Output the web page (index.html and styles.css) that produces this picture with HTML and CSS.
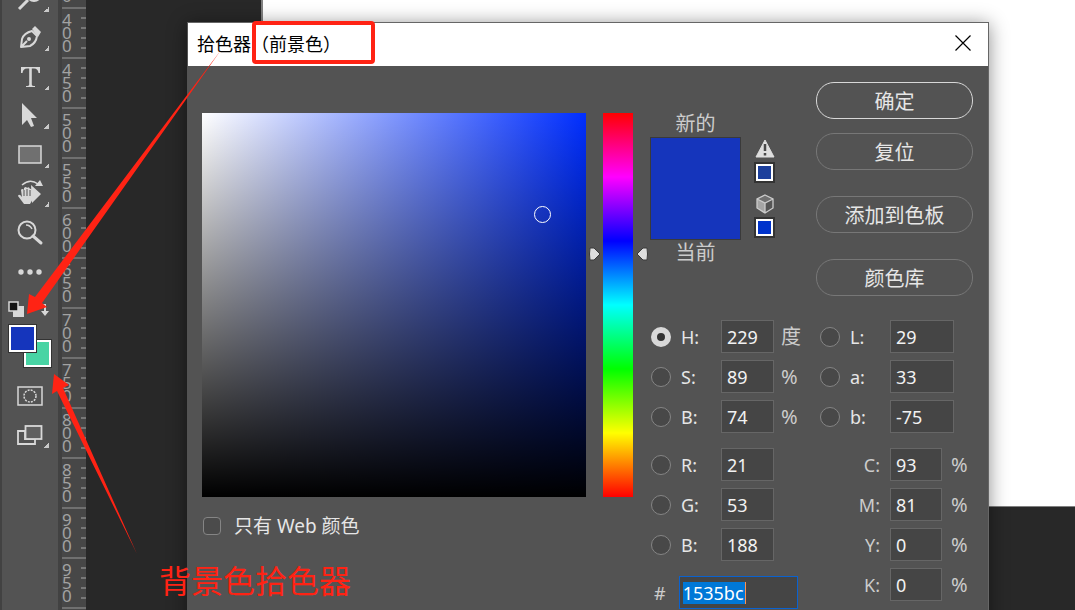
FILE: index.html
```html
<!DOCTYPE html>
<html lang="zh-CN">
<head>
<meta charset="utf-8">
<title>拾色器</title>
<link rel="stylesheet" href="styles.css">
</head>
<body>
<div class="app">
  <nav class="toolbar">
    <button class="tool has-menu" aria-label="减淡工具"><svg width="30" height="30" viewBox="0 0 30 30"><circle cx="19" cy="10" r="8" fill="#d8d8d8"/><path d="M13 16 4 25" stroke="#d8d8d8" stroke-width="3"/></svg></button>
    <button class="tool has-menu" aria-label="钢笔工具"><svg width="30" height="30" viewBox="0 0 30 30"><path d="M6 24 7 16Q9 10 17 8L22 13Q21 20 15 23Z M6 24 12 18" fill="none" stroke="#d8d8d8" stroke-width="2" stroke-linejoin="round"/><circle cx="14" cy="16" r="2" fill="#d8d8d8"/><path d="M17 6 20 3 26 9 23 14Z" fill="#d8d8d8"/></svg></button>
    <button class="tool has-menu" aria-label="文字工具"><svg width="30" height="30" viewBox="0 0 30 30"><path d="M6 5H25V11H23.500Q23 6.500 19 6.500H16.800V22.500Q16.800 24 20 24V25H11V24Q14.200 24 14.200 22.500V6.500H12Q8 6.500 7.500 11H6Z" fill="#d8d8d8"/></svg></button>
    <button class="tool has-menu" aria-label="选择工具"><svg width="30" height="30" viewBox="0 0 30 30"><path d="M7 2V24L12 19 16 26 19 25 16 17H22Z" fill="#d8d8d8"/></svg></button>
    <button class="tool has-menu" aria-label="矩形工具"><svg width="30" height="30" viewBox="0 0 30 30"><rect x="4" y="6" width="22" height="17" fill="#707070" stroke="#d8d8d8" stroke-width="1.500"/></svg></button>
    <button class="tool has-menu" aria-label="旋转视图工具"><svg width="30" height="30" viewBox="0 0 30 30"><path d="M7 6Q15-1 23 5" fill="none" stroke="#d8d8d8" stroke-width="1.500"/><path d="M28 7H20L25 1ZM16 6 26 15 17 24Z" fill="#d8d8d8"/><path d="M9 25 3 17Q4 14 7 18L6 11Q7 9 9 11V9Q11 7 12 9Q14 7 15 10Q17 9 17 12L18 15Q21 15 19 18L15 25Z" fill="#d8d8d8"/><path d="M9 11V17M12 10V17M15 11V17" stroke="#535353"/></svg></button>
    <button class="tool" aria-label="缩放工具"><svg width="30" height="30" viewBox="0 0 30 30"><circle cx="12" cy="12" r="8.500" fill="none" stroke="#d8d8d8" stroke-width="2"/><path d="M11 7Q15 7 17 11" fill="none" stroke="#d8d8d8" stroke-width="1.500"/><path d="m18 18 8 7" stroke="#d8d8d8" stroke-width="3" stroke-linecap="round"/></svg></button>
    <button class="tool" aria-label="编辑工具栏"><svg width="30" height="30" viewBox="0 0 30 30"><g fill="#d8d8d8"><circle cx="6" cy="15" r="2.700"/><circle cx="15" cy="15" r="2.700"/><circle cx="24" cy="15" r="2.700"/></g></svg></button>
    <div class="mini">
      <button aria-label="默认颜色"><svg width="16" height="16" viewBox="0 0 16 16"><path d="M5 5H16V16H5Z" fill="#d8d8d8"/><path d="M1 1H10V10H1Z" fill="#151515" stroke="#d8d8d8" stroke-width="1.500"/></svg></button>
      <button aria-label="切换颜色"><svg width="14" height="16" viewBox="0 0 14 16"><path d="M3 4H8V11" fill="none" stroke="#d8d8d8" stroke-width="2"/><path d="M4 0V8L0 4ZM4 10H12L8 15Z" fill="#d8d8d8"/></svg></button>
    </div>
    <div class="pair">
      <button class="bg" aria-label="背景色"></button>
      <button class="fg" aria-label="前景色"></button>
    </div>
    <button class="tool" aria-label="快速蒙版"><svg width="30" height="30" viewBox="0 0 30 30"><rect x="3" y="6" width="24" height="18" fill="none" stroke="#d8d8d8" stroke-width="1.500"/><circle cx="15" cy="15" r="6" fill="none" stroke="#d8d8d8" stroke-width="1.500" stroke-dasharray="2 1.140"/></svg></button>
    <button class="tool has-menu" aria-label="屏幕模式"><svg width="30" height="30" viewBox="0 0 30 30"><path d="M3 11H10V19H20V24H3Z" fill="none" stroke="#d8d8d8" stroke-width="1.800"/><rect x="10.500" y="6" width="16" height="13" fill="#606060" stroke="#d8d8d8" stroke-width="1.800"/></svg></button>
  </nav>
  <div class="ruler">
    <span>350</span><span>400</span><span>450</span><span>500</span><span>550</span><span>600</span><span>650</span><span>700</span><span>750</span><span>800</span><span>850</span><span>900</span><span>950</span><span></span>
  </div>
  <main class="canvas"><div class="document"></div></main>

  <section class="dialog" role="dialog" aria-labelledby="title">
    <header class="titlebar">
      <h1 id="title">拾色器（前景色）</h1>
      <button class="close" aria-label="关闭"><svg width="16" height="16" viewBox="0 0 16 16"><path d="M0.500 0.500 15.500 15.500M15.500 0.500 0.500 15.500" stroke="#000" stroke-width="1.200"/></svg></button>
    </header>
    <div class="content">
      <div class="picker">
        <div class="spectrum">
          <div class="field"><i class="cursor"></i></div>
          <div class="hue">
            <svg class="marker left" width="12" height="14" viewBox="0 0 12 14"><path d="M1 1H5L11 7 5 13H1Q0 7 1 1Z" fill="#dedede" stroke="#3a3a3a"/></svg>
            <svg class="marker right" width="12" height="14" viewBox="0 0 12 14"><path d="M11 1H7L1 7 7 13H11Q12 7 11 1Z" fill="#dedede" stroke="#3a3a3a"/></svg>
          </div>
        </div>
        <label class="web"><input type="checkbox">只有 Web 颜色</label>
      </div>
      <div class="side">
        <div class="top">
          <div class="preview"><span>新的</span><div class="sample"></div><span>当前</span></div>
          <div class="warnings">
            <svg width="20" height="19" viewBox="0 0 20 19"><path d="M10 1 19 18H1Z" fill="#dedede" stroke="#dedede" stroke-linejoin="round"/><path d="M10 5V12M10 14V16.500" stroke="#484848" stroke-width="2.500"/></svg>
            <button class="chip gamut" aria-label="色域内颜色"></button>
            <svg class="cube" width="20" height="20" viewBox="0 0 20 20"><path d="M10 1 18 5V14L10 19 2 14V5Z" fill="#555"/><path d="M2 5 10 9V19L2 14Z" fill="#a5a5a5"/><path d="M10 1 18 5 10 9 2 5Z" fill="#707070"/><path d="M2 5 10 9 18 5M10 9V19M10 1 18 5V14L10 19 2 14V5Z" fill="none" stroke="#ccc" stroke-width="1.300"/></svg>
            <button class="chip safe" aria-label="Web 安全颜色"></button>
          </div>
          <div class="actions">
            <button class="primary">确定</button>
            <button>复位</button>
            <button class="apart">添加到色板</button>
            <button class="apart">颜色库</button>
          </div>
        </div>
        <div class="values">
          <div class="column">
            <div class="group">
              <div class="row"><input type="radio" name="mode" id="mh" checked><label for="mh">H:</label><input type="text" aria-label="H" value="229"><span>度</span></div>
              <div class="row"><input type="radio" name="mode" id="ms"><label for="ms">S:</label><input type="text" aria-label="S" value="89"><span>%</span></div>
              <div class="row"><input type="radio" name="mode" id="mv"><label for="mv">B:</label><input type="text" aria-label="B" value="74"><span>%</span></div>
            </div>
            <div class="group">
              <div class="row"><input type="radio" name="mode" id="mr"><label for="mr">R:</label><input type="text" aria-label="R" value="21"></div>
              <div class="row"><input type="radio" name="mode" id="mg"><label for="mg">G:</label><input type="text" aria-label="G" value="53"></div>
              <div class="row"><input type="radio" name="mode" id="mb"><label for="mb">B:</label><input type="text" aria-label="B" value="188"></div>
            </div>
            <div class="hex"><label for="hex">#</label><div class="hexbox"><input class="selected" id="hex" type="text" value="1535bc"></div></div>
          </div>
          <div class="column">
            <div class="group lab">
              <div class="row"><input type="radio" name="mode" id="ml"><label for="ml">L:</label><input type="text" aria-label="L" value="29"></div>
              <div class="row"><input type="radio" name="mode" id="ma"><label for="ma">a:</label><input type="text" aria-label="a" value="33"></div>
              <div class="row"><input type="radio" name="mode" id="mlb"><label for="mlb">b:</label><input type="text" aria-label="b" value="-75"></div>
            </div>
            <div class="group cmyk">
              <div class="row"><label for="c">C:</label><input type="text" id="c" value="93"><span>%</span></div>
              <div class="row"><label for="m">M:</label><input type="text" id="m" value="81"><span>%</span></div>
              <div class="row"><label for="y">Y:</label><input type="text" id="y" value="0"><span>%</span></div>
              <div class="row"><label for="k">K:</label><input type="text" id="k" value="0"><span>%</span></div>
            </div>
          </div>
        </div>
      </div>
    </div>
  </section>

  <svg class="arrows" width="400" height="610" viewBox="0 0 400 610">
    <g fill="#ff2314"><path d="M27 314 29 294 35 297 221 50 42 303 47 307Z"/><path d="M54 374 52 394 57 391 137 554 63 388 69 385Z"/></g>
    <rect x="254" y="23" width="119" height="39" rx="2" fill="none" stroke="#ff2314" stroke-width="4"/>
  </svg>
  <p class="note">背景色拾色器</p>
</div>
</body>
</html>
```

FILE: styles.css
```css
* { box-sizing: border-box; }
body {
  margin: 0;
  font-family: "Noto Sans", "Noto Sans CJK SC", sans-serif;
  font-size: 18px;
  color: #e6e6e6;
}
button { padding: 0; border: 0; background: none; font: inherit; color: inherit; }
svg { display: block; }

.app { position: relative; display: flex; height: 100vh; overflow: hidden; background: #282828; }

/* Toolbar */
.toolbar {
  flex: none;
  display: flex;
  flex-direction: column;
  width: 60px;
  margin-top: -21px;
  background: #535353;
  border-left: 2px solid #424242;
  border-right: 2px solid #424242;
}
.tool {
  position: relative;
  flex: none;
  display: grid;
  place-items: center;
  width: 55px;
  height: 39px;
}
.has-menu::after {
  content: "";
  position: absolute;
  right: 8px;
  bottom: 6px;
  width: 5px;
  height: 5px;
  background: linear-gradient(135deg, transparent 50%, #c8c8c8 50%);
}
.mini { display: flex; justify-content: space-between; padding: 10px 7px 0 6px; }
.pair { position: relative; height: 51px; margin-top: 8px; }
.pair button { position: absolute; width: 27px; height: 27px; border: 2px solid #fff; outline: 1px solid #333; }
.pair .fg { left: 7px; top: 0; background: #1535bc; }
.pair .bg { left: 22px; top: 15px; background: #48d4a4; }

/* Ruler */
.ruler {
  flex: none;
  display: flex;
  flex-direction: column;
  width: 26px;
  margin-top: -43px;
  background: #474747;
  border-left: 2px solid #404040;
  color: #a2a2a2;
  font-size: 17px;
  line-height: 13px;
}
.ruler span {
  flex: none;
  height: 50px;
  padding: 4px 12px 0 0;
  border-top: 2px solid #707070;
  word-break: break-all;
  background: repeating-linear-gradient(transparent 0 8px, #777 8px 10px) right top / 5px 40px no-repeat;
}

/* Canvas */
.canvas { flex: 1; padding: 0 0 103px 175px; }
.document { height: 100%; background: #fff; border: solid #808080; border-width: 0 0 1px 2px; }

/* Dialog window */
.dialog {
  position: absolute;
  left: 187px;
  right: 86px;
  top: 22px;
  min-height: 640px;
  background: #535353;
  border: 1px solid #666;
  border-left-color: #535353;
  box-shadow: 0 2px 18px rgba(0, 0, 0, .45);
}
.titlebar {
  display: flex;
  align-items: center;
  justify-content: space-between;
  height: 43px;
  padding: 0 17px 3px 9px;
  background: #fff;
  color: #000;
}
.titlebar h1 { margin: 0; font-size: 18px; font-weight: 400; }
.content { display: flex; gap: 17px; padding: 16px 15px 0 14px; }

.picker { flex: 1; padding-top: 31px; }
.spectrum { display: flex; gap: 17px; height: 384px; }
.field {
  position: relative;
  flex: 1;
  background: linear-gradient(to top, #000, transparent), linear-gradient(to right, #fff, #002eff);
}
.cursor {
  position: absolute;
  left: 89%;
  top: 26%;
  width: 17px;
  height: 17px;
  margin: -7px 0 0 -10px;
  border: 1px solid #fff;
  border-radius: 50%;
}
.hue {
  position: relative;
  width: 30px;
  background: linear-gradient(#f00, #f0f, #00f, #0ff, #0f0, #ff0, #f00);
}
.marker { position: absolute; top: 134px; }
.marker.left { right: 32px; }
.marker.right { left: 33px; }
.web { display: flex; align-items: center; gap: 13px; margin-top: 15px; padding-left: 1px; font-size: 19px; line-height: 28px; }
.web input {
  appearance: none;
  width: 18px;
  height: 18px;
  margin: 0;
  border: 1px solid #858585;
  border-radius: 4px;
  background: #4b4b4b;
}

.side { flex: none; width: 323px; }
.top { display: flex; justify-content: space-between; }
.preview { width: 91px; padding-top: 29px; text-align: center; font-size: 20px; line-height: 26px; color: #ccc; }
.preview span { display: block; }
.sample { height: 103px; background: #1535bc; border: 1px solid #3a3a3a; }
.warnings { display: flex; flex-direction: column; align-items: center; width: 21px; padding-top: 57px; margin-right: 28px; }
.chip { width: 17px; height: 17px; margin-top: 6px; border: 2px solid #fff; outline: 2px solid #333; }
.gamut { background: #1c3f9c; }
.safe { background: #0033cc; margin-top: 5px; }
.cube { margin-top: 13px; }
.actions { display: flex; flex-direction: column; width: 157px; gap: 14px; }
.actions button {
  height: 37px;
  padding-top: 2px;
  border: 1px solid #777;
  border-radius: 18px;
  font-size: 20px;
  line-height: 34px;
}
.actions .primary { border-color: #d8d8d8; }
.actions .apart { margin-top: 12px; }

/* Numeric values */
.values { display: grid; grid-template-columns: 169px 1fr; margin-top: 24px; padding-left: 1px; }
.group { display: grid; gap: 7px; margin-bottom: 15px; }
.row { display: flex; align-items: center; height: 33px; }
.row label { width: 40px; }
.row span { margin-left: 7px; color: #ccc; font-size: 20px; line-height: 33px; }
.row input[type="text"] {
  width: 53px;
  height: 33px;
  padding: 0 0 0 5px;
  border: 1px solid #666;
  background: #454545;
  color: #f2f2f2;
  font: inherit;
}
.row input[type="radio"] {
  appearance: none;
  flex: none;
  width: 20px;
  height: 20px;
  margin: 0 10px 0 0;
  border: 1px solid #858585;
  border-radius: 50%;
  background: #484848;
}
.row input[type="radio"]:checked { border: 6px solid #d8d8d8; background: #333; }
.lab .row input[type="text"] { width: 64px; }
.cmyk .row label { width: 60px; margin-right: 10px; text-align: right; color: #ccc; }
.cmyk .row input[type="text"] { width: 52px; }
.cmyk .row span { margin-left: 9px; }
.hex { display: flex; align-items: center; gap: 13px; height: 33px; padding-left: 3px; color: #ccc; }
.hexbox {
  flex: none;
  display: flex;
  align-items: center;
  width: 119px;
  height: 33px;
  padding-left: 3px;
  border: 1px solid #0a62d0;
  background: #454545;
}
.selected {
  width: 63px;
  height: 22px;
  padding: 0;
  border: 0;
  border-right: 1px solid #ff9050;
  background: #0078d7;
  color: #fff;
  font: inherit;
}

/* Annotations */
.arrows { position: absolute; left: 0; top: 0; pointer-events: none; }
.note {
  position: absolute;
  left: 159px;
  top: 560px;
  margin: 0;
  color: #ff2314;
  font-size: 32px;
  line-height: 42px;
}
```
